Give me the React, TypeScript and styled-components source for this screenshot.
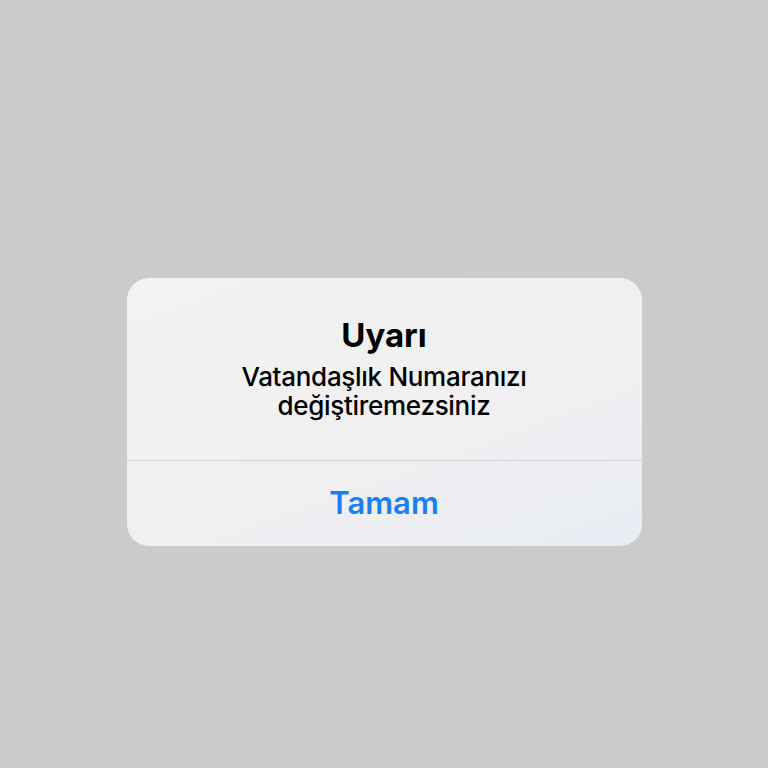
import React from "react";
import styled, { createGlobalStyle } from "styled-components";

const Global = createGlobalStyle`
  html, body { margin: 0; padding: 0; background: #cbcbcb; }
  body { font-family: Inter, "Noto Sans", "Liberation Sans", sans-serif; -webkit-font-smoothing: antialiased; }
`;

const Screen = styled.div`
  width: 768px;
  height: 768px;
  background: #cbcbcb;
  display: flex;
  justify-content: center;
  align-items: flex-start;
  padding-top: 278px;
  box-sizing: border-box;
`;

const Dialog = styled.div`
  width: 515px;
  border-radius: 22px;
  overflow: hidden;
  background: linear-gradient(160deg, #f2f2f2 0%, #f0f0f1 55%, #e8ecf3 100%);
  display: flex;
  flex-direction: column;
`;

const Body = styled.div`
  height: 183px;
  box-sizing: border-box;
  padding-top: 39px;
  display: flex;
  flex-direction: column;
  align-items: center;
  text-align: center;
  border-bottom: 1.5px solid #d4d4d6;
`;

const Title = styled.div`
  font-size: 33px;
  font-weight: 700;
  color: #000;
  line-height: 36px;
`;

const Message = styled.div`
  margin-top: 9px;
  font-size: 26px;
  font-weight: 500;
  color: #000;
  line-height: 29px;
  letter-spacing: -0.3px;
`;

const Action = styled.button`
  height: 85px;
  border: none;
  background: transparent;
  font-family: inherit;
  font-size: 31px;
  font-weight: 600;
  color: #1a7ff2;
  cursor: pointer;
  padding: 0 0 2px;
`;

export default function App() {
  return (
    <>
      <Global />
      <Screen>
        <Dialog>
          <Body>
            <Title>Uyarı</Title>
            <Message>
              Vatandaşlık Numaranızı
              <br />
              değiştiremezsiniz
            </Message>
          </Body>
          <Action>Tamam</Action>
        </Dialog>
      </Screen>
    </>
  );
}
